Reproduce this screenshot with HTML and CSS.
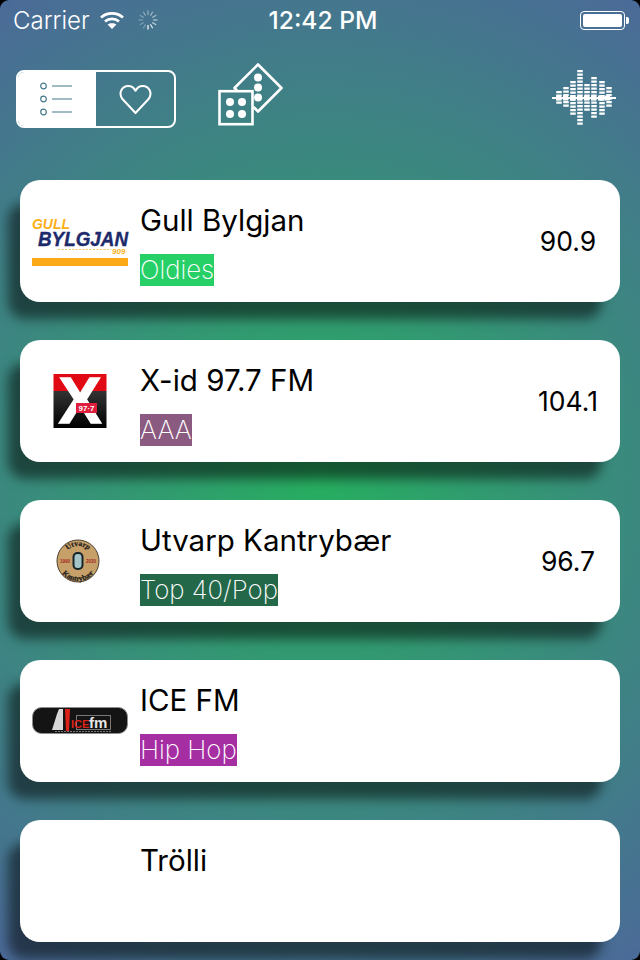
FILE: index.html
```html
<!DOCTYPE html>
<html>
<head>
    <meta charset="utf-8">
    <title>Radio Stations</title>
    <link rel="stylesheet" href="styles.css">
</head>
<body>
    <div class="status-bar">
        <div class="status-left">
            <span class="carrier">Carrier</span>
            <svg class="wifi" width="24" height="18" viewBox="0 0 24 18">
                <path d="M1 6.500C7 1 17 1 23 6.500" fill="none" stroke="#fff" stroke-width="2.600"/>
                <path d="M5 10.500C9 7 15 7 19 10.500" fill="none" stroke="#fff" stroke-width="2.600"/>
                <path d="M12 18L7.600 13.600C10 11.800 14 11.800 16.400 13.600Z" fill="#fff"/>
            </svg>
            <svg class="spinner" width="20" height="20" viewBox="0 0 20 20" stroke="#fff" stroke-width="1.200">
                <path d="M10 0.500V5" opacity=".45"/>
                <path d="M14.700 1.800L12.400 5.800" opacity=".5"/>
                <path d="M18.200 5.300L14.200 7.600" opacity=".55"/>
                <path d="M19.500 10H15" opacity=".6"/>
                <path d="M18.200 14.700L14.200 12.400" opacity=".7"/>
                <path d="M14.700 18.200L12.400 14.200" opacity=".85"/>
                <path d="M10 19.500V15" opacity="1"/>
                <path d="M5.300 18.200L7.600 14.200" opacity=".3"/>
                <path d="M1.800 14.700L5.800 12.400" opacity=".3"/>
                <path d="M0.500 10H5" opacity=".3"/>
                <path d="M1.800 5.300L5.800 7.600" opacity=".35"/>
                <path d="M5.300 1.800L7.600 5.800" opacity=".4"/>
            </svg>
        </div>
        <span class="time">12:42 PM</span>
        <div class="status-right">
            <div class="battery"><div class="battery-level"></div></div>
            <div class="battery-nub"></div>
        </div>
    </div>

    <div class="toolbar">
        <div class="segment">
            <div class="segment-item active">
                <svg width="34" height="36" viewBox="0 0 34 36" fill="none" stroke="#44788a" stroke-width="1.200">
                    <circle cx="3.500" cy="5" r="2.800"/>
                    <circle cx="3.500" cy="18" r="2.800"/>
                    <circle cx="3.500" cy="31" r="2.800"/>
                    <path d="M12 5H32M12 18H32M12 31H32"/>
                </svg>
            </div>
            <div class="segment-item">
                <svg width="33" height="31" viewBox="0 0 34 32" fill="none" stroke="#fff" stroke-width="2.100" stroke-linejoin="round">
                    <path d="M17 30L3.500 15.500C-1 9.500 3 2 9.500 2C13 2 15.500 4 17 7C18.500 4 21 2 24.500 2C31 2 35 9.500 30.500 15.500Z"/>
                </svg>
            </div>
        </div>
        <svg class="dice" width="66" height="64" viewBox="0 0 66 64">
            <path d="M19 27.500L16.500 25L40 1.500L63.500 25L40 48.500L35.500 44" fill="none" stroke="#fff" stroke-width="2.600" stroke-linejoin="round"/>
            <circle cx="40" cy="14.500" r="4" fill="#fff"/>
            <circle cx="40" cy="24.500" r="4" fill="#fff"/>
            <circle cx="40" cy="34.500" r="4" fill="#fff"/>
            <rect x="1.500" y="28.200" width="33" height="33" fill="none" stroke="#fff" stroke-width="2.600"/>
            <circle cx="12" cy="39" r="4" fill="#fff"/>
            <circle cx="24" cy="39" r="4" fill="#fff"/>
            <circle cx="12" cy="51" r="4" fill="#fff"/>
            <circle cx="24" cy="51" r="4" fill="#fff"/>
        </svg>
        <svg class="equalizer" width="64" height="56" viewBox="0 0 64 56" stroke="#fff">
            <g stroke-width="5.500" stroke-dasharray="2.300 1.200">
                <path d="M7 21V35"/>
                <path d="M14 17V38"/>
                <path d="M21 11V45"/>
                <path d="M28 0V56"/>
                <path d="M35 14V42"/>
                <path d="M42 7V49"/>
                <path d="M50 11V45"/>
                <path d="M57 17V38"/>
            </g>
            <path d="M0 28H64" stroke-width="2"/>
            <path d="M4 28H60" stroke-width="5" stroke-dasharray="5 2"/>
        </svg>
    </div>

    <div class="station-list">
        <div class="station">
            <div class="station-logo">
                <svg width="98" height="54" viewBox="0 0 98 54">
                    <text x="1" y="15" class="logo-gull" textLength="38" lengthAdjust="spacingAndGlyphs">GULL</text>
                    <text x="7" y="32" class="logo-bylgjan" textLength="90" lengthAdjust="spacingAndGlyphs">BYLGJAN</text>
                    <text x="81" y="40" class="logo-909">909</text>
                    <path d="M27 35.500H80" stroke="#f5c265" stroke-width="1" stroke-dasharray="2 1.500"/>
                    <rect x="1" y="44" width="96" height="8" fill="#fcaa17"/>
                </svg>
            </div>
            <div class="station-info">
                <div class="station-name">Gull Bylgjan</div>
                <span class="genre genre-oldies">Oldies</span>
            </div>
            <div class="station-freq">90.9</div>
        </div>

        <div class="station">
            <div class="station-logo">
                <svg width="54" height="54" viewBox="0 0 54 54">
                    <defs>
                        <linearGradient id="xblack" x1="0" y1="0" x2="0" y2="1">
                            <stop offset="0" stop-color="#333"/>
                            <stop offset="1" stop-color="#000"/>
                        </linearGradient>
                    </defs>
                    <rect x="0.500" y="0" width="53" height="17" fill="#e10a14"/>
                    <rect x="0.500" y="17" width="53" height="37" fill="url(#xblack)"/>
                    <text x="27" y="49" class="logo-x">X</text>
                    <rect x="23" y="29" width="21" height="10" fill="#df1d3c"/>
                    <text x="33.500" y="37" class="logo-977">97·7</text>
                </svg>
            </div>
            <div class="station-info">
                <div class="station-name">X-id 97.7 FM</div>
                <span class="genre genre-aaa">AAA</span>
            </div>
            <div class="station-freq">104.1</div>
        </div>

        <div class="station">
            <div class="station-logo">
                <svg class="coin" width="44" height="44" viewBox="0 0 44 44">
                    <defs>
                        <path id="coin-top" d="M7 22A15 15 0 0 1 37 22"/>
                        <path id="coin-bottom" d="M2 22A20 20 0 0 0 42 22"/>
                    </defs>
                    <circle cx="22" cy="22" r="21" fill="#c79f68" stroke="#4a4030" stroke-width="1"/>
                    <text class="coin-word"><textPath href="#coin-top" startOffset="50%">Utvarp</textPath></text>
                    <text class="coin-word"><textPath href="#coin-bottom" startOffset="50%">Kantrybær</textPath></text>
                    <text x="9" y="24" class="coin-year">1990</text>
                    <text x="35" y="24" class="coin-year">2030</text>
                    <rect x="16.500" y="13" width="11" height="18" rx="5" fill="#16242a"/>
                    <rect x="18.500" y="15" width="7" height="14" rx="3" fill="#a4c4c8"/>
                </svg>
            </div>
            <div class="station-info">
                <div class="station-name">Utvarp Kantrybær</div>
                <span class="genre genre-top40">Top 40/Pop</span>
            </div>
            <div class="station-freq">96.7</div>
        </div>

        <div class="station">
            <div class="station-logo">
                <svg width="98" height="30" viewBox="0 0 98 30">
                    <rect x="1.500" y="1.500" width="95" height="26" rx="9" fill="#141414" stroke="#8d8d8d" stroke-width="1"/>
                    <path d="M21 24L26 8L28 3H32V24Z" fill="#d8d8d8"/>
                    <path d="M34 3H39L38 25H35Z" fill="#dc2218"/>
                    <rect x="45.500" y="9.500" width="34" height="14" fill="none" stroke="#777" stroke-width="1"/>
                    <text x="40" y="22" class="logo-ice">ICE</text>
                    <text x="58" y="22" class="logo-fm">fm</text>
                    <path d="M24 25.500H80" stroke="#777" stroke-width="1" stroke-dasharray="2 1"/>
                </svg>
            </div>
            <div class="station-info">
                <div class="station-name">ICE FM</div>
                <span class="genre genre-hiphop">Hip Hop</span>
            </div>
            <div class="station-freq"></div>
        </div>

        <div class="station">
            <div class="station-logo"></div>
            <div class="station-info">
                <div class="station-name">Trölli</div>
            </div>
            <div class="station-freq"></div>
        </div>
    </div>
</body>
</html>
```

FILE: styles.css
```css
html {
    background-color: #000;
}

body {
    font-family: Inter, "Liberation Sans", sans-serif;
    margin: 0;
    padding: 0;
    width: 640px;
    height: 960px;
    overflow: hidden;
    border-radius: 9px;
    background-image: radial-gradient(circle farthest-corner at 50% 50%, #27ae60, #4b6a98);
}

.status-bar {
    display: grid;
    grid-template-columns: 1fr auto 1fr;
    align-items: center;
    height: 40px;
    padding: 0 11px 0 13px;
    color: #fff;
}

.status-left,
.status-right {
    display: flex;
    align-items: center;
}

.status-right {
    justify-content: flex-end;
}

.carrier {
    width: 87px;
    font-size: 24px;
    font-weight: 300;
}

.wifi {
    margin-right: 14px;
}

.time {
    margin-left: 4px;
    font-size: 24.600px;
    font-weight: 500;
}

.battery {
    width: 45px;
    height: 19px;
    padding: 2px;
    box-sizing: border-box;
    border: 1px solid #fff;
    border-radius: 4px;
}

.battery-level {
    height: 100%;
    background-color: #fff;
    border-radius: 2px;
}

.battery-nub {
    width: 3px;
    height: 7px;
    margin-left: 1px;
    background-color: #fff;
    border-radius: 0 2px 2px 0;
}

.toolbar {
    display: flex;
    align-items: flex-start;
    height: 140px;
    padding: 23px 24px 0 16px;
    box-sizing: border-box;
}

.segment {
    display: flex;
    width: 160px;
    height: 58px;
    margin-top: 7px;
    box-sizing: border-box;
    border: 2px solid #fff;
    border-radius: 8px;
    overflow: hidden;
}

.segment-item {
    flex: 1;
    display: flex;
    align-items: center;
    justify-content: center;
}

.segment-item.active {
    background-color: #fff;
}

.dice {
    margin-left: 42px;
}

.equalizer {
    margin-left: auto;
    margin-top: 7px;
}

.station-list {
    display: flex;
    flex-direction: column;
    gap: 38px;
    padding: 0 20px;
}

.station {
    display: flex;
    align-items: stretch;
    height: 122px;
    flex-shrink: 0;
    background-color: #fff;
    border-radius: 20px;
    box-shadow: -15px 20px 12px -3px rgba(0, 0, 0, 0.5);
}

.station-logo {
    width: 120px;
    flex-shrink: 0;
    display: flex;
    align-items: center;
    justify-content: center;
}

.station-logo svg {
    overflow: visible;
}

.coin {
    margin-right: 4px;
}

.station-info {
    flex: 1;
    padding-top: 20px;
}

.station-name {
    height: 40px;
    line-height: 40px;
    font-size: 29.500px;
    color: #000;
}

.genre {
    display: inline-block;
    height: 32px;
    line-height: 32px;
    margin-top: 14px;
    font-size: 25.800px;
    font-weight: 250;
    color: #fff;
}

.genre-oldies {
    background-color: #27cf67;
}

.genre-aaa {
    background-color: #8a5a80;
}

.genre-top40 {
    background-color: #24684a;
}

.genre-hiphop {
    background-color: #a52ea3;
}

.station-freq {
    width: 104px;
    flex-shrink: 0;
    display: flex;
    align-items: center;
    justify-content: center;
    font-size: 26.500px;
    color: #000;
}

.logo-gull {
    font: italic 700 15.500px "Liberation Sans", sans-serif;
    fill: #fcaf17;
}

.logo-bylgjan {
    font: italic 700 20px "Liberation Sans", sans-serif;
    fill: #1d2a6b;
    stroke: #1d2a6b;
    stroke-width: 0.4px;
}

.logo-909 {
    font: italic 700 8px "Liberation Sans", sans-serif;
    fill: #fcaf17;
}

.logo-x {
    font: 700 64px "Liberation Sans", sans-serif;
    fill: #fff;
    stroke: #fff;
    stroke-width: 1.5px;
    text-anchor: middle;
}

.logo-977 {
    font: 700 8px "Liberation Sans", sans-serif;
    fill: #fff;
    text-anchor: middle;
}

.coin-word {
    font: 700 7.500px "Liberation Serif", serif;
    fill: #1a1a1a;
    stroke: #1a1a1a;
    stroke-width: 0.2px;
    text-anchor: middle;
}

.coin-year {
    font: 700 4.500px "Liberation Sans", sans-serif;
    fill: #a52a20;
    text-anchor: middle;
}

.logo-ice {
    font: 700 11px "Liberation Sans", sans-serif;
    fill: #dc2218;
}

.logo-fm {
    font: 700 15px "Liberation Sans", sans-serif;
    fill: #e6e6e6;
}
```
